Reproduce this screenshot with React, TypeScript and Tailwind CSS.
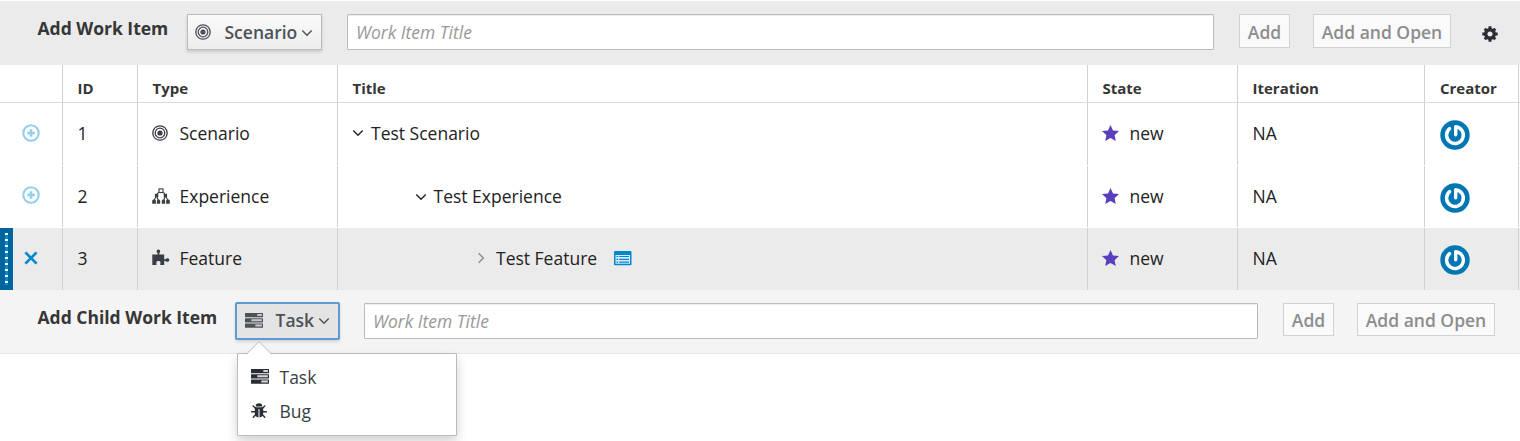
type IconProps = { className?: string };

function ScenarioIcon({ className = "" }: IconProps) {
  return (
    <svg viewBox="0 0 16 16" className={className} fill="none" stroke="currentColor">
      <circle cx="8" cy="8" r="7.2" strokeWidth="1.3" />
      <circle cx="8" cy="8" r="4.8" strokeWidth="1.3" />
      <circle cx="8" cy="8" r="2.6" fill="currentColor" stroke="none" />
    </svg>
  );
}

function ExperienceIcon({ className = "" }: IconProps) {
  return (
    <svg viewBox="0 0 18 17" className={className} fill="currentColor">
      <rect x="7" y="0.9" width="4" height="3.6" fill="none" stroke="currentColor" strokeWidth="1.1" />
      <path d="M6.8 4.2 5 6.2M11.2 4.2 13 6.2M4 9 2.2 12M5 9l1.2 3M13 9l-1.2 3M14 9l1.8 3" fill="none" stroke="currentColor" strokeWidth="1.1" />
      <rect x="2.9" y="5.8" width="3.4" height="3.5" />
      <rect x="11.7" y="5.8" width="3.4" height="3.5" />
      <path d="M.2 15.8v-3.2l1-1.1h1.6l1.1 1.1v3.2zM4.9 15.8v-3.2l1-1.1h1.3l1 1.1v3.2zM9.8 15.8v-3.2l1-1.1h1.3l1 1.1v3.2zM14.1 15.8v-3.2l1.1-1.1h1.6l1 1.1v3.2z" />
    </svg>
  );
}

function FeatureIcon({ className = "" }: IconProps) {
  return (
    <svg viewBox="0 0 18 17" className={className} fill="currentColor">
      <path d="M.3 5.6H5.6V4.2C4.2 3.2 4.3.5 6.4.5S8.6 3.2 7.3 4.2V5.6H12.2V10.2H13.6C14.5 8.7 17.3 8.8 17.3 11S14.5 13.3 13.6 11.9H12.2V16H8.3V14.2C9 12.8 7.9 11.9 6.5 11.9S3.8 12.8 4.5 14.2V16H.3Z" />
    </svg>
  );
}

function TaskIcon({ className = "" }: IconProps) {
  return (
    <svg viewBox="0 0 18 15" className={className} fill="currentColor">
      <path fillOpacity="0.2" d="M12 1h5v2.3h-5zM6 6.2h11v2.3H6zM10 11.4h7v2.3h-7z" />
      <path fillRule="evenodd" d="M.5 0h17q.5 0 .5.5v3.3q0 .5-.5.5H.5q-.5 0-.5-.5V.5Q0 0 .5 0ZM12.3 1.1v2h4.6v-2zM.5 5.2h17q.5 0 .5.5V9q0 .5-.5.5H.5Q0 9.5 0 9V5.7q0-.5.5-.5ZM6.3 6.3v2h10.6v-2zM.5 10.4h17q.5 0 .5.5v3.3q0 .5-.5.5H.5q-.5 0-.5-.5v-3.3q0-.5.5-.5ZM10.3 11.5v2h6.6v-2z" />
    </svg>
  );
}

function BugIcon({ className = "" }: IconProps) {
  return (
    <svg viewBox="0 0 16 16" className={className}>
      <path d="M4.7 3.5a3.3 3.3 0 0 1 6.6 0z" fill="currentColor" />
      <path d="M3.8 4.3h8.4v6.4c0 2-1.5 3.5-3.7 3.7V6h-1v8.4C5.3 14.2 3.8 12.7 3.8 10.7z" fill="currentColor" />
      <path d="M4.5 5.3 2.2 3M11.5 5.3 13.8 3M4.5 8.7H.6M11.5 8.7h3.9M5 11.3l-2.7 3M11 11.3l2.7 3" fill="none" stroke="currentColor" strokeWidth="1.4" strokeLinecap="round" />
    </svg>
  );
}

function GearIcon({ className = "" }: IconProps) {
  return (
    <svg viewBox="-8 -8 16 16" className={className} fill="none" stroke="currentColor">
      <circle r="4.3" strokeWidth="3.4" />
      <path d="M0-7.7V-5M0 7.7V5M-7.7 0H-5M7.7 0H5M-5.3-5.3-3.7-3.7M5.3 5.3 3.7 3.7M-5.3 5.3-3.7 3.7M5.3-5.3 3.7-3.7" strokeWidth="3" />
    </svg>
  );
}

function Chevron({ className = "" }: IconProps) {
  return (
    <svg viewBox="0 0 12 12" className={className} fill="none" stroke="currentColor" strokeWidth="1.4">
      <path d="M1.3 3.6 6 8.3l4.700-4.700" />
    </svg>
  );
}

function PlusCircle() {
  return (
    <svg viewBox="0 0 18 18" className="h-[18px] w-[18px] text-[#93cfec]" fill="none" stroke="currentColor">
      <circle cx="9" cy="9" r="7.7" strokeWidth="2.1" />
      <path d="M9 5.2v7.6M5.2 9h7.6" strokeWidth="2.6" />
    </svg>
  );
}

function Cross() {
  return (
    <svg viewBox="0 0 18 18" className="h-[18px] w-[18px] text-[#0088ce]" fill="none" stroke="currentColor">
      <path d="m3.4 3.4 11.2 11.2M14.6 3.4 3.4 14.6" strokeWidth="2.7" />
    </svg>
  );
}

function StarIcon() {
  return (
    <svg viewBox="0 0 17 16" className="h-4 w-[17px] text-[#5a3ebd]" fill="currentColor">
      <path d="M8.5 0 11 5.4l6 .7-4.400 4.100 1.200 5.800-5.300-2.900L3.2 16l1.200-5.800L0 6.1l6-.7z" />
    </svg>
  );
}

function Avatar() {
  return (
    <svg viewBox="0 0 30 30" className="h-[30px] w-[30px]">
      <circle cx="15" cy="15" r="14.7" fill="#0077b3" />
      <path d="M9.6 8.6A8.4 8.4 0 1 0 15.700 6.700V14.800" fill="none" stroke="#fff" strokeWidth="3.4" strokeLinecap="round" strokeLinejoin="round" />
    </svg>
  );
}

function DetailIcon() {
  return (
    <svg viewBox="0 0 18 15" className="h-[15px] w-[18px]">
      <rect width="17.5" height="14.3" rx="1" fill="#0088ce" />
      <rect x="1.5" y="4" width="14.5" height="8.7" fill="#d8ecf7" />
      <path d="M2.5 5.5h12.5M2.5 8.4h12.5M2.5 11.2h12.5" stroke="#0088ce" strokeWidth="1.2" />
      <path d="M4.7 4v8.7" stroke="#d8ecf7" strokeWidth="1" />
    </svg>
  );
}

const columns =
  "grid grid-cols-[63px_75px_200px_750px_150px_187px_94px_1px]";
const cell = "flex items-center border-r border-[#d1d1d1]";

const rows = [
  { id: 1, type: "Scenario", title: "Test Scenario", Icon: ScenarioIcon, icon: "w-4 h-4", indent: "pl-[14px]", height: "h-[63px]", pad: "pb-[3px]", avatarPad: "pt-[2px]" },
  { id: 2, type: "Experience", title: "Test Experience", Icon: ExperienceIcon, icon: "w-[18px] h-[17px]", indent: "pl-[76.5px]", height: "h-[62px]", pad: "pb-px", avatarPad: "pt-[3px]" },
  { id: 3, type: "Feature", title: "Test Feature", Icon: FeatureIcon, icon: "w-[18px] h-[17px]", indent: "pl-[137px]", height: "h-[62px]", pad: "pb-[3px]", avatarPad: "pt-[2px]" },
];

function TitleInput({ className }: { className: string }) {
  return (
    <input
      placeholder="Work Item Title"
      className={`h-9 rounded-[1px] border border-[#bbb] bg-white px-2 text-[17.5px] italic shadow-[inset_0_1px_1px_rgba(3,3,3,0.075)] outline-none placeholder:text-[#999] ${className}`}
    />
  );
}

function DisabledButton({ label, className }: { label: string; className: string }) {
  return (
    <button className={`border border-[#d1d1d1] bg-[#fafafa] text-center leading-none font-semibold whitespace-nowrap text-[#8b8d8f] ${className}`}>
      {label}
    </button>
  );
}

export default function App() {
  return (
    <div className="h-[441px] w-[1520px] overflow-hidden bg-white pt-px font-['Open_Sans',sans-serif] text-[17.5px] leading-6 text-[#222]">
      <div className="flex h-16 items-start bg-[#ebebeb] pt-[13px]">
        <div className="w-[187px] pt-[2px] pl-[37.5px] font-bold whitespace-nowrap text-[#363636]">Add Work Item</div>
        <button className="flex h-9 w-[135px] items-center border border-[#bbb] bg-linear-to-b from-[#fafafa] to-[#ededed] pl-[7px] font-semibold text-[#4d5258] shadow-[0_2px_3px_rgba(3,3,3,0.15)]">
          <ScenarioIcon className="h-4 w-4" />
          <span className="ml-[13.5px]">Scenario</span>
          <Chevron className="mt-px ml-1 h-3 w-3" />
        </button>
        <TitleInput className="ml-[25px] w-[867px]" />
        <DisabledButton label="Add" className="ml-[25px] h-[34px] w-[51px] pt-[3px]" />
        <DisabledButton label="Add and Open" className="ml-[23px] h-[34px] w-[138px] pt-[3px]" />
        <GearIcon className="mt-[11.5px] ml-[31px] h-4 w-4 text-[#292e34]" />
      </div>

      <div className={`${columns} h-[38px] border-b border-[#d9d9d9] text-[15px] font-bold text-[#363636]`}>
        {["", "ID", "Type", "Title", "State", "Iteration", "Creator"].map((name) => (
          <div key={name} className={`${cell} pt-2 ${name === "Creator" ? "pl-[15px]" : "pl-[14.5px]"}`}>{name}</div>
        ))}
      </div>

      {rows.map(({ id, type, title, Icon, icon, indent, height, pad, avatarPad }) => (
        <div key={id} className={`${columns} ${height} ${id === 3 ? "bg-[#ebebeb]" : "border-b border-white"}`}>
          <div className={cell}>
            {id === 3 ? (
              <div className="mr-[9px] flex h-full w-[13px] justify-center bg-[#00659c] py-[5px]">
                <div className="w-[3px] bg-[repeating-linear-gradient(to_bottom,#fff_0px_2px,#0088ce_2px_6px)]" />
              </div>
            ) : (
              <div className="w-[21.5px]" />
            )}
            <div className="pb-[3px]">{id === 3 ? <Cross /> : <PlusCircle />}</div>
          </div>
          <div className={`${cell} ${pad} pl-[14.5px]`}>{id}</div>
          <div className={`${cell} ${pad} pl-[14px]`}>
            <span className="flex w-[27.5px]"><Icon className={`${icon} text-[#393f44]`} /></span>
            {type}
          </div>
          <div className={`${cell} ${pad} ${indent}`}>
            <Chevron className={`mt-px h-3 w-3 ${id === 3 ? "-rotate-90 text-[#8b8d8f]" : ""}`} />
            <span className={id === 3 ? "ml-[9px]" : "ml-[7px]"}>{title}</span>
            {id === 3 && <span className="mt-px ml-[17px]"><DetailIcon /></span>}
          </div>
          <div className={`${cell} ${pad} pl-[14px]`}>
            <StarIcon />
            <span className="ml-[10.5px]">new</span>
          </div>
          <div className={`${cell} ${pad} pl-[14.5px]`}>NA</div>
          <div className={`${cell} ${avatarPad} pl-[15px]`}><Avatar /></div>
        </div>
      ))}

      <div className="flex h-16 items-start border-b border-[#e8e8e8] bg-[#f4f4f4] pt-[13px]">
        <div className="w-[235px] pt-[2px] pl-[37.5px] font-bold whitespace-nowrap text-[#363636]">Add Child Work Item</div>
        <div className="relative -mt-px">
          <button className="flex h-[38px] w-[105px] items-center rounded-[2px] border-2 border-[#5b9bd1] bg-[#e4e4e4] pb-[2px] pl-[7.5px] font-semibold text-[#4d5258] shadow-[0_2px_3px_rgba(3,3,3,0.12)]">
            <TaskIcon className="h-[15px] w-[18px]" />
            <span className="ml-[13px]">Task</span>
            <Chevron className="mt-0.5 ml-1 h-3 w-3 shrink-0" />
          </button>
          <div className="absolute top-[51px] left-[2px] h-[83px] w-[220px] rounded-[1px] border border-[#bbb] bg-white pt-[11px] pl-[13px] text-[#393f44] shadow-[0_6px_12px_rgba(3,3,3,0.175)]">
            <svg viewBox="0 0 26 14" className="absolute -top-[13px] left-[7.5px] h-[14px] w-[26px]">
              <path d="M0 14 13 1l13 13z" fill="#fff" />
              <path d="M.5 13 13 .7 25.5 13" fill="none" stroke="#bbb" />
            </svg>
            <div className="flex h-[34px] items-start">
              <span className="flex w-[28.5px] pt-[4px]"><TaskIcon className="h-[15px] w-[18px] text-[#292e34]" /></span>Task
            </div>
            <div className="flex h-[34px] items-start">
              <span className="flex w-[28.5px] pt-[4px]"><BugIcon className="h-4 w-4 text-[#292e34]" /></span>Bug
            </div>
          </div>
        </div>
        <TitleInput className="ml-6 w-[894px]" />
        <DisabledButton label="Add" className="ml-[25px] h-[33px] w-[51px] pt-[2px]" />
        <DisabledButton label="Add and Open" className="ml-[23px] h-[33px] w-[138px] pt-[2px]" />
      </div>
    </div>
  );
}
